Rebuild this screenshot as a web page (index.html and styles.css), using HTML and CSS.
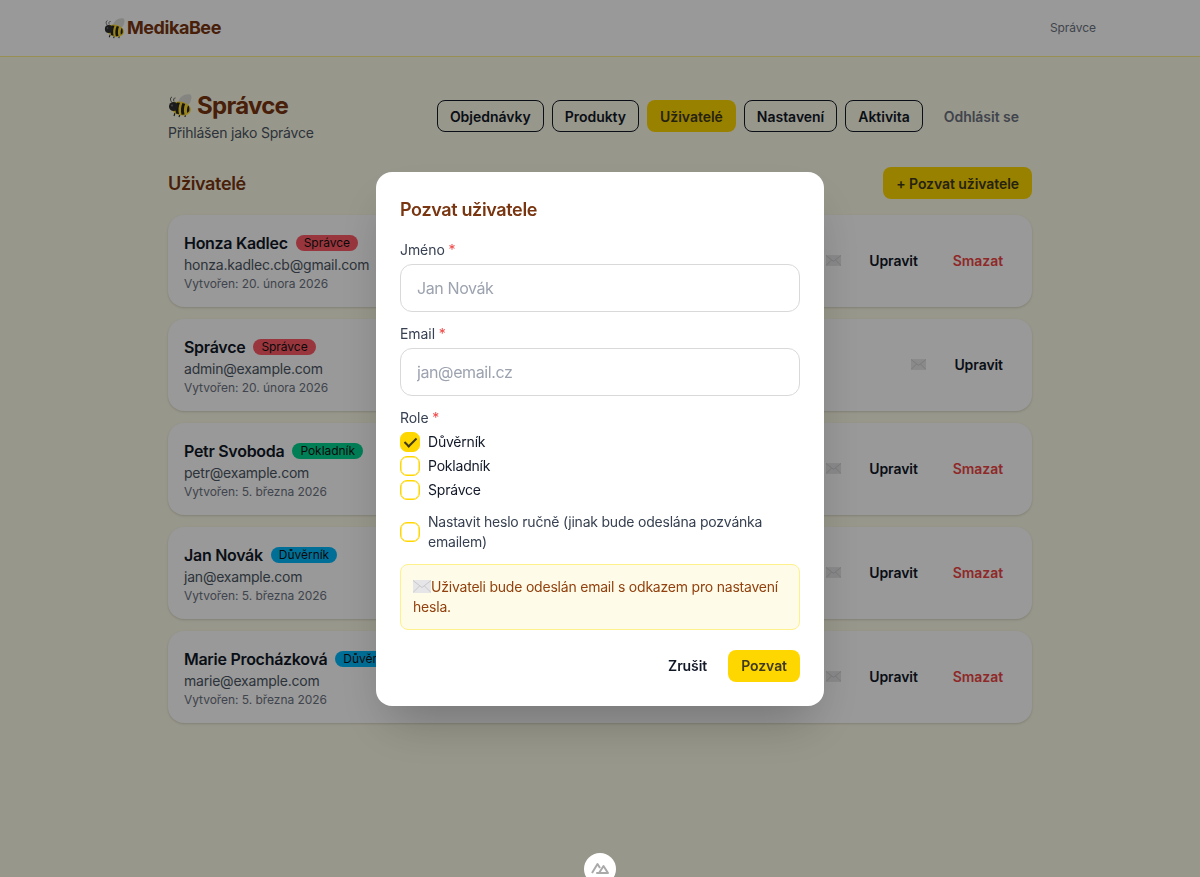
FILE: index.html
```html
<!DOCTYPE html>
<html lang="cs">
<head>
    <meta charset="UTF-8">
    <meta name="viewport" content="width=device-width, initial-scale=1.0">
    <link rel="stylesheet" href="styles.css">
    <title>MedikaBee</title>
</head>
<body>
    <svg class="defs" width="0" height="0" aria-hidden="true">
        <symbol id="bee" viewBox="0 0 24 24">
            <path d="M10 9C11 3 17 -.5 22 .5c2.500 1 1.500 7-1.500 10-2.500 2-7.500 1.500-10.500-1.500z" fill="#dcdcd8"/>
            <path d="M3.500 8C2 6 2 3.500 4 3M6 7.500C5 5.500 6 3.500 7.500 4" fill="none" stroke="#3a3a3a" stroke-width=".8"/>
            <path d="M6 22l1-3M11 23l1-3M17 23l.5-3" stroke="#2b2b2b" stroke-width="1.200" fill="none"/>
            <ellipse cx="13" cy="14.500" rx="10" ry="6.800" transform="rotate(14 13 14.500)" fill="#ffdc2e"/>
            <path d="M9 8.500c-1.500 3-2 7-1 11l3 .8c-1-4-.5-8.500 1-11.500zM14.500 9c-1.500 3-2 7.500-1 11.800l3-.3c-1-4-.7-7.500.7-10.500zM20 11.500c-1 2.500-1.300 5-.8 7.500l2-1.700c.4-1.800.2-3.700-.3-5z" fill="#232323"/>
            <circle cx="5.500" cy="12.500" r="4.500" fill="#2d2d2d"/>
            <circle cx="4" cy="11.500" r=".9" fill="#777"/>
        </symbol>
        <symbol id="mail" viewBox="0 0 18 13">
            <rect width="18" height="13" fill="#e6e6e8"/>
            <path d="M0 .5l9 7 9-7M0 12.500l6.500-6.500M18 12.500L11.500 6" fill="none" stroke="#c4c4c8" stroke-width=".9"/>
        </symbol>
    </svg>

    <header class="topbar">
        <div class="topbar-inner">
            <a class="logo"><svg class="logo-bee"><use href="#bee"/></svg>MedikaBee</a>
            <span class="topbar-user">Správce</span>
        </div>
    </header>

    <main class="container">
        <div class="page-head">
            <div>
                <h1><svg class="title-bee"><use href="#bee"/></svg>Správce</h1>
                <p class="logged-as">Přihlášen jako Správce</p>
            </div>
            <nav class="tabs">
                <button class="btn btn-outline">Objednávky</button>
                <button class="btn btn-outline">Produkty</button>
                <button class="btn btn-primary">Uživatelé</button>
                <button class="btn btn-outline">Nastavení</button>
                <button class="btn btn-outline">Aktivita</button>
                <button class="btn btn-ghost btn-muted">Odhlásit se</button>
            </nav>
        </div>

        <div class="section-head">
            <h2>Uživatelé</h2>
            <button class="btn btn-primary">+ Pozvat uživatele</button>
        </div>

        <ul class="user-list">
            <li class="user-card">
                <div>
                    <div class="user-name">Honza Kadlec <span class="badge badge-red">Správce</span></div>
                    <div class="user-email">honza.kadlec.cb@gmail.com</div>
                    <div class="user-date">Vytvořen: 20. února 2026</div>
                </div>
                <div class="user-actions">
                    <button class="btn btn-ghost btn-mail"><svg class="mail-icon"><use href="#mail"/></svg></button>
                    <button class="btn btn-ghost">Upravit</button>
                    <button class="btn btn-ghost btn-danger">Smazat</button>
                </div>
            </li>
            <li class="user-card">
                <div>
                    <div class="user-name">Správce <span class="badge badge-red">Správce</span></div>
                    <div class="user-email">admin@example.com</div>
                    <div class="user-date">Vytvořen: 20. února 2026</div>
                </div>
                <div class="user-actions">
                    <button class="btn btn-ghost btn-mail"><svg class="mail-icon"><use href="#mail"/></svg></button>
                    <button class="btn btn-ghost">Upravit</button>
                </div>
            </li>
            <li class="user-card">
                <div>
                    <div class="user-name">Petr Svoboda <span class="badge badge-green">Pokladník</span></div>
                    <div class="user-email">petr@example.com</div>
                    <div class="user-date">Vytvořen: 5. března 2026</div>
                </div>
                <div class="user-actions">
                    <button class="btn btn-ghost btn-mail"><svg class="mail-icon"><use href="#mail"/></svg></button>
                    <button class="btn btn-ghost">Upravit</button>
                    <button class="btn btn-ghost btn-danger">Smazat</button>
                </div>
            </li>
            <li class="user-card">
                <div>
                    <div class="user-name">Jan Novák <span class="badge badge-blue">Důvěrník</span></div>
                    <div class="user-email">jan@example.com</div>
                    <div class="user-date">Vytvořen: 5. března 2026</div>
                </div>
                <div class="user-actions">
                    <button class="btn btn-ghost btn-mail"><svg class="mail-icon"><use href="#mail"/></svg></button>
                    <button class="btn btn-ghost">Upravit</button>
                    <button class="btn btn-ghost btn-danger">Smazat</button>
                </div>
            </li>
            <li class="user-card">
                <div>
                    <div class="user-name">Marie Procházková <span class="badge badge-blue">Důvěrník</span></div>
                    <div class="user-email">marie@example.com</div>
                    <div class="user-date">Vytvořen: 5. března 2026</div>
                </div>
                <div class="user-actions">
                    <button class="btn btn-ghost btn-mail"><svg class="mail-icon"><use href="#mail"/></svg></button>
                    <button class="btn btn-ghost">Upravit</button>
                    <button class="btn btn-ghost btn-danger">Smazat</button>
                </div>
            </li>
        </ul>
    </main>

    <div class="overlay">
        <form class="modal">
            <h3>Pozvat uživatele</h3>

            <label class="field-label" for="name">Jméno <span class="req">*</span></label>
            <input class="input" type="text" id="name" placeholder="Jan Novák">

            <label class="field-label" for="email">Email <span class="req">*</span></label>
            <input class="input" type="email" id="email" placeholder="jan@email.cz">

            <div class="field-label">Role <span class="req">*</span></div>
            <div class="role-list">
                <label class="check-row"><input class="checkbox" type="checkbox" checked>Důvěrník</label>
                <label class="check-row"><input class="checkbox" type="checkbox">Pokladník</label>
                <label class="check-row"><input class="checkbox" type="checkbox">Správce</label>
            </div>

            <label class="check-row manual"><input class="checkbox" type="checkbox">Nastavit heslo ručně (jinak bude odeslána pozvánka emailem)</label>

            <div class="notice"><svg class="notice-icon"><use href="#mail"/></svg>Uživateli bude odeslán email s odkazem pro nastavení hesla.</div>

            <div class="modal-actions">
                <button type="button" class="btn btn-ghost">Zrušit</button>
                <button type="button" class="btn btn-primary">Pozvat</button>
            </div>
        </form>
    </div>

    <div class="devtools">
        <svg width="18" height="12" viewBox="0 0 18 12"><path d="M1 11L6.500 2l2.500 4M6 11h11L12.500 4 8 11z" fill="none" stroke="#aaa" stroke-width="2" stroke-linejoin="round"/></svg>
    </div>
</body>
</html>
```

FILE: styles.css
```css
* {
    box-sizing: border-box;
}

body {
    font-family: Inter, "Liberation Sans", sans-serif;
    margin: 0;
    min-height: 100vh;
    background-color: #fefce8;
    color: #111827;
    font-size: 14px;
    line-height: 20px;
    letter-spacing: -0.015em;
}

.defs {
    position: absolute;
}

.topbar {
    background-color: #fff;
    border-bottom: 1px solid #fef08a;
    height: 57px;
}

.topbar-inner {
    max-width: 1024px;
    height: 56px;
    margin: 0 auto;
    padding: 0 16px;
    display: flex;
    justify-content: space-between;
    align-items: center;
}

.logo {
    display: flex;
    align-items: center;
    gap: 2px;
    font-size: 18px;
    font-weight: 700;
    letter-spacing: -0.025em;
    color: #78350f;
}

.logo-bee {
    width: 21px;
    height: 21px;
}

.topbar-user {
    font-size: 12px;
    letter-spacing: -0.005em;
    color: #6b7280;
}

.container {
    max-width: 896px;
    margin: 0 auto;
    padding: 32px 16px;
}

.page-head {
    display: flex;
    justify-content: space-between;
    align-items: center;
    margin-bottom: 24px;
}

h1 {
    display: flex;
    align-items: center;
    gap: 5px;
    margin: 0 0 1px;
    padding-top: 1px;
    font-size: 24px;
    line-height: 32px;
    font-weight: 700;
    letter-spacing: -0.03em;
    color: #78350f;
}

.title-bee {
    width: 24px;
    height: 24px;
}

.logged-as {
    margin: 0;
    color: #4b5563;
}

.tabs {
    display: flex;
    gap: 8px;
}

.tabs .btn {
    letter-spacing: -0.002em;
}

.btn {
    height: 32px;
    padding: 0 12px;
    border: 1px solid transparent;
    border-radius: 8px;
    background: none;
    font-family: inherit;
    font-size: 14px;
    font-weight: 600;
    letter-spacing: -0.005em;
    color: #111827;
    display: inline-flex;
    align-items: center;
    cursor: pointer;
}

.btn-outline {
    border-color: #111827;
}

.btn-primary {
    background-color: #ffd700;
    color: #3f3a1c;
}

.btn-muted {
    color: #6b7280;
}

.btn-danger {
    color: #ef4444;
}

.btn-mail {
    padding: 0 5px 0 12px;
}

.section-head {
    display: flex;
    justify-content: space-between;
    align-items: center;
    margin-bottom: 16px;
}

h2 {
    margin: 0;
    padding-top: 2px;
    font-size: 18px;
    line-height: 28px;
    font-weight: 600;
    letter-spacing: -0.02em;
    color: #78350f;
}

.user-list {
    list-style-type: none;
    margin: 0;
    padding: 0;
    display: flex;
    flex-direction: column;
    gap: 12px;
}

.user-card {
    background-color: #fff;
    border-radius: 16px;
    padding: 16px;
    height: 92px;
    display: flex;
    justify-content: space-between;
    align-items: center;
    box-shadow: 0 1px 3px rgba(0, 0, 0, 0.1), 0 1px 2px rgba(0, 0, 0, 0.06);
}

.user-name {
    font-size: 16px;
    line-height: 24px;
    font-weight: 600;
    letter-spacing: -0.018em;
    display: flex;
    align-items: center;
    gap: 8px;
}

.badge {
    height: 16px;
    padding: 0 8px;
    border-radius: 999px;
    font-size: 12px;
    line-height: 16px;
    font-weight: 400;
    letter-spacing: -0.003em;
    color: #111;
}

.badge-red {
    background-color: #ff5a67;
}

.badge-green {
    background-color: #00d390;
}

.badge-blue {
    background-color: #00bafe;
}

.user-email {
    color: #4b5563;
}

.user-date {
    font-size: 12px;
    line-height: 16px;
    letter-spacing: -0.004em;
    padding-top: 1px;
    margin-bottom: -1px;
    color: #6b7280;
}

.user-actions {
    display: flex;
    gap: 9px;
    margin-top: -1px;
}

.mail-icon {
    width: 15px;
    height: 11px;
}

/* dims the page behind the invite dialog */
.overlay {
    position: fixed;
    inset: 0;
    background-color: rgba(0, 0, 0, 0.4);
    display: flex;
    justify-content: center;
    align-items: center;
}

.modal {
    width: 448px;
    padding: 24px;
    background-color: #fff;
    border-radius: 16px;
    box-shadow: 0 25px 50px -12px rgba(0, 0, 0, 0.25);
    display: flex;
    flex-direction: column;
}

h3 {
    margin: 0 0 16px;
    font-size: 18px;
    line-height: 28px;
    font-weight: 600;
    letter-spacing: -0.02em;
    color: #78350f;
}

.field-label {
    margin-bottom: 4px;
    letter-spacing: -0.005em;
    color: #374151;
}

.req {
    color: #ef4444;
}

.input {
    height: 48px;
    margin-bottom: 12px;
    padding: 0 16px;
    border: 1px solid #d9d9d9;
    border-radius: 12px;
    font-family: inherit;
    font-size: 16px;
    letter-spacing: -0.025em;
    color: #111827;
}

.input::placeholder {
    color: #9ca3af;
}

.role-list {
    display: flex;
    flex-direction: column;
    gap: 4px;
    margin-bottom: 12px;
}

.check-row {
    display: flex;
    align-items: center;
    gap: 8px;
    color: #111827;
}

.manual {
    color: #374151;
}

.checkbox {
    appearance: none;
    flex: none;
    width: 20px;
    height: 20px;
    margin: 0;
    border: 1px solid #ffd700;
    border-radius: 7px;
    background-color: #fff;
    box-shadow: inset 0 0 0 0.5px #ffd700;
    display: flex;
    align-items: center;
    justify-content: center;
}

.checkbox:checked {
    background-color: #ffd700;
}

.checkbox:checked::before {
    content: "";
    width: 5px;
    height: 10px;
    margin-top: -2px;
    border: solid #3f3a1c;
    border-width: 0 2px 2px 0;
    transform: rotate(45deg);
}

.notice {
    margin-top: 12px;
    padding: 12px;
    background-color: #fefce8;
    border: 1px solid #fef08a;
    border-radius: 8px;
    color: #92400e;
}

.notice-icon {
    width: 18px;
    height: 13px;
    vertical-align: -1px;
}

.modal-actions {
    display: flex;
    justify-content: flex-end;
    gap: 8px;
    margin-top: 20px;
}

.devtools {
    position: fixed;
    left: 584px;
    bottom: -8px;
    width: 32px;
    height: 32px;
    border-radius: 50%;
    background-color: #fff;
    display: flex;
    justify-content: center;
    padding-top: 9px;
}
```
